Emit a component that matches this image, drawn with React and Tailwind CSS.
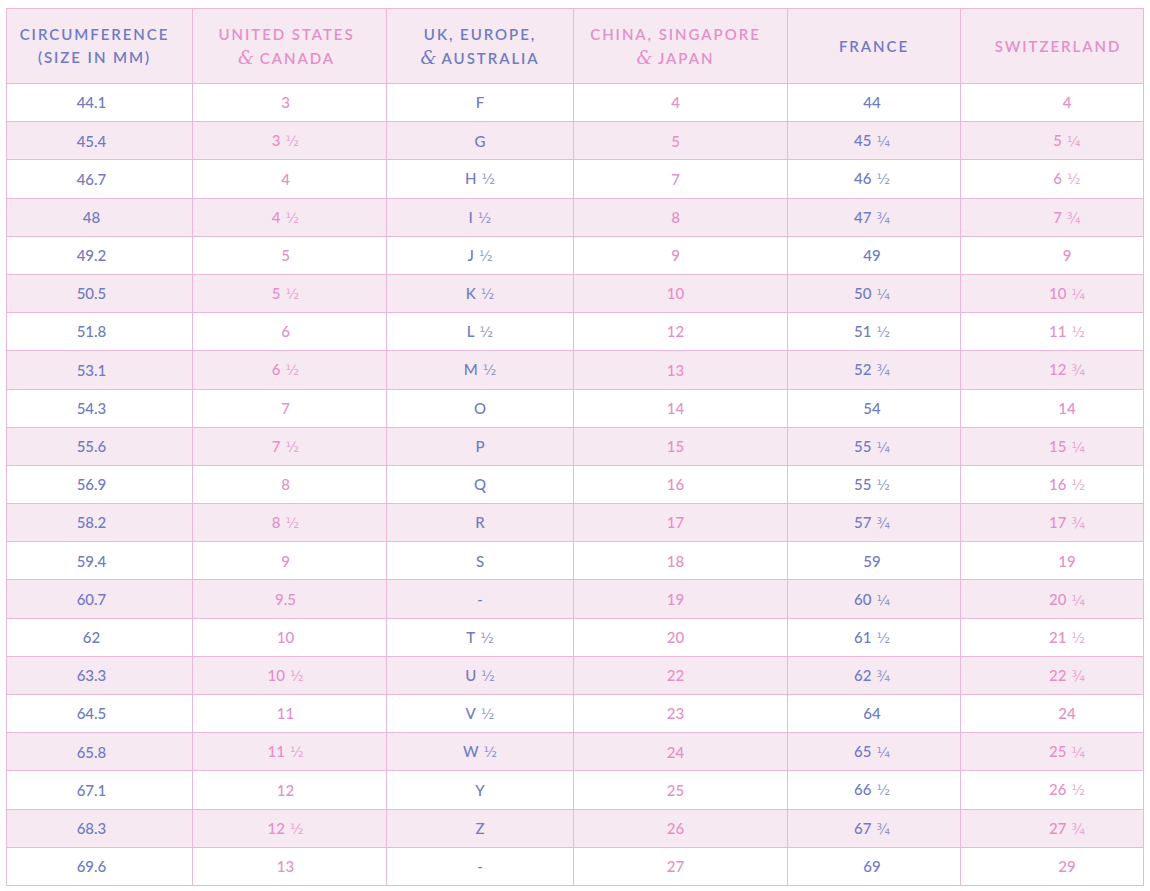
import React from "react";

const headers = [
  ["CIRCUMFERENCE", "(SIZE IN MM)"],
  ["UNITED STATES", "& CANADA"],
  ["UK, EUROPE,", "& AUSTRALIA"],
  ["CHINA, SINGAPORE", "& JAPAN"],
  ["FRANCE"],
  ["SWITZERLAND"],
];

const colWidths = ["w-[186px]", "w-[194px]", "w-[187px]", "w-[214px]", "w-[173px]", "w-[183px]"];
// text in the source chart isn't quite centred in every column
const headPad = ["pr-[10px]", "pr-[6px]", "", "pr-[10px]", "", "pl-[12px]"];
const cellPad = ["pr-[16px]", "pr-[8px]", "", "pr-[10px]", "pr-[4px]", "pl-[30px]"];

const rows = [
  ["44.1", "3", "F", "4", "44", "4"],
  ["45.4", "3 ½", "G", "5", "45 ¼", "5 ¼"],
  ["46.7", "4", "H ½", "7", "46 ½", "6 ½"],
  ["48", "4 ½", "I ½", "8", "47 ¾", "7 ¾"],
  ["49.2", "5", "J ½", "9", "49", "9"],
  ["50.5", "5 ½", "K ½", "10", "50 ¼", "10 ¼"],
  ["51.8", "6", "L ½", "12", "51 ½", "11 ½"],
  ["53.1", "6 ½", "M ½", "13", "52 ¾", "12 ¾"],
  ["54.3", "7", "O", "14", "54", "14"],
  ["55.6", "7 ½", "P", "15", "55 ¼", "15 ¼"],
  ["56.9", "8", "Q", "16", "55 ½", "16 ½"],
  ["58.2", "8 ½", "R", "17", "57 ¾", "17 ¾"],
  ["59.4", "9", "S", "18", "59", "19"],
  ["60.7", "9.5", "-", "19", "60 ¼", "20 ¼"],
  ["62", "10", "T ½", "20", "61 ½", "21 ½"],
  ["63.3", "10 ½", "U ½", "22", "62 ¾", "22 ¾"],
  ["64.5", "11", "V ½", "23", "64", "24"],
  ["65.8", "11 ½", "W ½", "24", "65 ¼", "25 ¼"],
  ["67.1", "12", "Y", "25", "66 ½", "26 ½"],
  ["68.3", "12 ½", "Z", "26", "67 ¾", "27 ¾"],
  ["69.6", "13", "-", "27", "69", "29"],
];

// odd columns blue, even columns pink
const textColor = (i) => (i % 2 === 0 ? "text-[#6f7bc4]" : "text-[#e58fc8]");

const HeaderLine = ({ text }) => {
  if (text.startsWith("& ")) {
    return (
      <div>
        <span className="font-['DejaVu_Serif',serif] italic font-normal text-[18px] tracking-normal">&amp;</span>
        {" " + text.slice(2)}
      </div>
    );
  }
  return <div>{text}</div>;
};

const Cell = ({ value, col }) => {
  const parts = value.split(" ");
  return (
    <span className={textColor(col)}>
      {parts[0]}
      {parts[1] ? (
        <span className="ml-[5px] font-['DejaVu_Sans',sans-serif] font-normal text-[14px] opacity-75">
          {parts[1]}
        </span>
      ) : null}
    </span>
  );
};

export default function App() {
  return (
    <div className="bg-white w-[1150px] h-[891px] pt-[8px] pl-[6px] font-['Lato',sans-serif]">
      <table className="table-fixed border-collapse w-[1137px]">
        <thead>
          <tr className="bg-[#f6e9f2] h-[75px]">
            {headers.map((lines, i) => (
              <th
                key={i}
                className={`${colWidths[i]} ${headPad[i]} border border-[#ebb9d8] text-center font-semibold text-[15px] leading-[23px] tracking-[0.13em] ${textColor(i)}`}
              >
                {lines.map((l, j) => (
                  <HeaderLine key={j} text={l} />
                ))}
              </th>
            ))}
          </tr>
        </thead>
        <tbody>
          {rows.map((row, r) => (
            <tr key={r} className={`h-[38.2px] ${r % 2 === 1 ? "bg-[#f6e9f2]" : "bg-white"}`}>
              {row.map((v, c) => (
                <td
                  key={c}
                  className={`${cellPad[c]} border border-[#ebb9d8] text-center text-[15px] font-medium py-0`}
                >
                  <Cell value={v} col={c} />
                </td>
              ))}
            </tr>
          ))}
        </tbody>
      </table>
    </div>
  );
}
